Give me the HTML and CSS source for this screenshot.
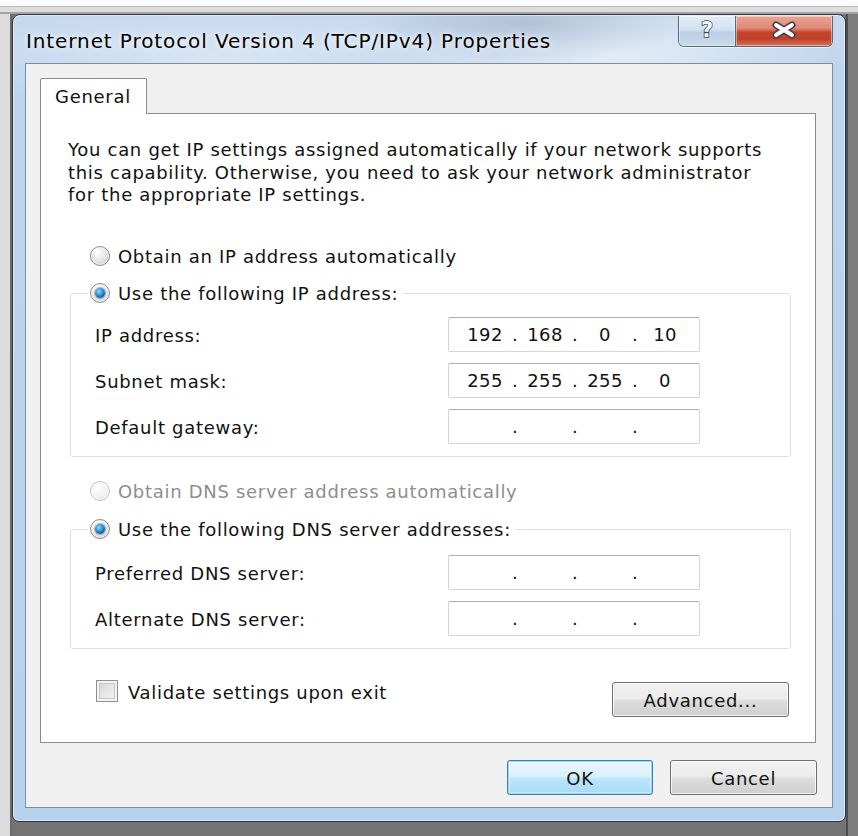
FILE: index.html
```html
<!DOCTYPE html>
<html lang="en">
<head>
<meta charset="utf-8">
<title>Internet Protocol Version 4 (TCP/IPv4) Properties</title>
<link rel="stylesheet" href="styles.css">
</head>
<body>
<div class="desktop">
  <div class="window">
    <div class="titlebar">
      <div class="title">Internet Protocol Version 4 (TCP/IPv4) Properties</div>
      <div class="caption-buttons">
        <div class="cap-btn help"><span class="help-glyph">?</span></div>
        <div class="cap-btn close">
          <svg width="30" height="18" viewBox="0 0 30 18">
            <path d="M7 4 L23 14 M23 4 L7 14" stroke="#3a3f45" stroke-width="7" stroke-linecap="round" fill="none"/>
            <path d="M7 4 L23 14 M23 4 L7 14" stroke="#ffffff" stroke-width="4" stroke-linecap="round" fill="none"/>
          </svg>
        </div>
      </div>
    </div>
    <div class="client">
      <div class="tabs"><div class="tab">General</div></div>
      <div class="panel">
        <p class="intro">You can get IP settings assigned automatically if your network supports<br>this capability. Otherwise, you need to ask your network administrator<br>for the appropriate IP settings.</p>

        <div class="option option-first"><span class="radio"></span><span class="opt-text">Obtain an IP address automatically</span></div>

        <div class="group group-ip">
          <div class="legend"><span class="radio checked"></span><span class="opt-text">Use the following IP address:</span></div>
          <div class="rows rows-ip">
            <div class="row"><span class="label">IP address:</span>
              <div class="ipfield"><span class="oct">192</span><span class="dot">.</span><span class="oct">168</span><span class="dot">.</span><span class="oct">0</span><span class="dot">.</span><span class="oct">10</span></div>
            </div>
            <div class="row"><span class="label">Subnet mask:</span>
              <div class="ipfield"><span class="oct">255</span><span class="dot">.</span><span class="oct">255</span><span class="dot">.</span><span class="oct">255</span><span class="dot">.</span><span class="oct">0</span></div>
            </div>
            <div class="row"><span class="label">Default gateway:</span>
              <div class="ipfield"><span class="oct"></span><span class="dot">.</span><span class="oct"></span><span class="dot">.</span><span class="oct"></span><span class="dot">.</span><span class="oct"></span></div>
            </div>
          </div>
        </div>

        <div class="option option-dns disabled"><span class="radio"></span><span class="opt-text">Obtain DNS server address automatically</span></div>

        <div class="group group-dns">
          <div class="legend"><span class="radio checked"></span><span class="opt-text">Use the following DNS server addresses:</span></div>
          <div class="rows rows-dns">
            <div class="row"><span class="label">Preferred DNS server:</span>
              <div class="ipfield"><span class="oct"></span><span class="dot">.</span><span class="oct"></span><span class="dot">.</span><span class="oct"></span><span class="dot">.</span><span class="oct"></span></div>
            </div>
            <div class="row"><span class="label">Alternate DNS server:</span>
              <div class="ipfield"><span class="oct"></span><span class="dot">.</span><span class="oct"></span><span class="dot">.</span><span class="oct"></span><span class="dot">.</span><span class="oct"></span></div>
            </div>
          </div>
        </div>

        <div class="bottom-row">
          <label class="check"><span class="checkbox"></span><span>Validate settings upon exit</span></label>
          <div class="btn btn-advanced">Advanced...</div>
        </div>
      </div>
      <div class="footer">
        <div class="btn btn-default">OK</div>
        <div class="btn">Cancel</div>
      </div>
    </div>
  </div>
</div>
</body>
</html>
```

FILE: styles.css
```css
* { box-sizing: border-box; }
html, body { margin: 0; padding: 0; }
body {
  width: 858px;
  height: 836px;
  overflow: hidden;
  font-family: "DejaVu Sans", "Open Sans", sans-serif;
  font-size: 18px;
  letter-spacing: 0.7px;
  color: #111;
}
.desktop {
  width: 858px;
  height: 836px;
  padding: 14px 12px 14px 12px;
  background:
    linear-gradient(to bottom, #fbfbfb 0 6px, #b9b9b9 6px 7px, #dedede 7px 12px, #a4a4a4 12px 14px, transparent 14px),
    linear-gradient(to right, #dcdcdc 0 10px, #6a6a6a 10px 12px, transparent 12px 846px, #4e4e4e 846px 848px, #7c7c7c 848px),
    #747474;
}
.window {
  width: 834px;
  height: 808px;
  border: 1px solid #2e3640;
  border-radius: 8px 8px 7px 7px;
  padding: 0 12px 13px 12px;
  display: flex;
  flex-direction: column;
  background:
    radial-gradient(ellipse 160px 40px at 62% 8px, rgba(120,140,165,0.35), transparent),
    radial-gradient(ellipse 220px 60px at 72% 40px, rgba(255,255,255,0.55), transparent),
    radial-gradient(ellipse 300px 50px at 25% 45px, rgba(255,255,255,0.35), transparent),
    linear-gradient(to bottom, #c6d9ef 0, #c2d7ee 48px, #bcd5ef 49px, #b6d2ef 100%);
  box-shadow: inset 0 0 0 1px rgba(255,255,255,0.5);
}
.titlebar {
  height: 49px;
  display: flex;
  justify-content: space-between;
  align-items: flex-start;
}
.title {
  margin-top: 13px;
  padding-left: 1px;
  font-size: 20px;
  letter-spacing: 0.9px;
  line-height: 26px;
  color: #000;
  white-space: nowrap;
  text-shadow: 0 0 10px rgba(255,255,255,0.9), 0 0 4px rgba(255,255,255,0.8);
}
.caption-buttons {
  display: flex;
  height: 31px;
  margin-top: 1px;
  border: 1px solid #56677a;
  border-top: none;
  border-radius: 0 0 6px 6px;
  overflow: hidden;
  box-shadow: 0 1px 0 rgba(255,255,255,0.6);
}
.cap-btn {
  display: flex;
  align-items: center;
  justify-content: center;
  height: 100%;
  box-shadow: inset 0 0 0 1px rgba(255,255,255,0.45);
}
.help {
  width: 57px;
  border-right: 1px solid #56677a;
  background: linear-gradient(to bottom, #e3ecf6 0%, #d3e1f0 45%, #bccfe4 55%, #c9daec 100%);
}
.help-glyph {
  font-family: "DejaVu Sans", sans-serif;
  font-weight: bold;
  font-size: 21px;
  letter-spacing: 0;
  line-height: 1;
  color: #f4f6f8;
  -webkit-text-stroke: 1.5px #3e4a57;
  paint-order: stroke fill;
  margin-top: -2px;
}
.close {
  width: 96px;
  background: linear-gradient(to bottom, #e8a493 0%, #de8a78 40%, #c6442e 55%, #c04028 75%, #d8705c 100%);
}
.close svg { margin-top: -2px; }
.client {
  flex: 1;
  border: 1px solid #7f8c9a;
  background: #f0f0f0;
  padding: 14px 16px 12px 14px;
  display: flex;
  flex-direction: column;
}
.tabs { display: flex; }
.tab {
  position: relative;
  z-index: 1;
  width: 107px;
  height: 36px;
  margin-bottom: -1px;
  border: 1px solid #898c95;
  border-bottom: none;
  border-radius: 2px 2px 0 0;
  background: #fff;
  padding-left: 14px;
  padding-top: 1px;
  line-height: 34px;
}
.panel {
  border: 1px solid #898c95;
  background: #fff;
  padding: 25px 24px 25px 27px;
}
.intro {
  margin: 0;
  line-height: 22.5px;
  white-space: nowrap;
}
.option {
  display: flex;
  align-items: center;
  height: 22px;
  margin-left: 22px;
}
.option-first { margin-top: 38.5px; }
.option-dns { margin-top: 23px; }
.opt-text { margin-left: 8px; line-height: 22px; padding-top: 2px; white-space: nowrap; }
.disabled { color: #8e8e8e; }
.radio {
  position: relative;
  width: 20px;
  height: 20px;
  flex: none;
  border-radius: 50%;
  border: 1px solid #8a8c8e;
  background: radial-gradient(circle at 35% 30%, #ffffff 0%, #e8e8e8 45%, #c9c9c9 100%);
  box-shadow: inset 0 0 0 1px rgba(255,255,255,0.7);
}
.disabled .radio {
  border-color: #c4c4c4;
  background: radial-gradient(circle at 35% 30%, #ffffff 0%, #f2f2f2 50%, #e2e2e2 100%);
}
.radio.checked::after {
  content: "";
  position: absolute;
  left: 4px;
  top: 4px;
  width: 10px;
  height: 10px;
  border-radius: 50%;
  background: radial-gradient(circle at 40% 35%, #9fdcff 0%, #3b9fe0 35%, #0d5a99 75%, #083a66 100%);
  box-shadow: 0 0 0 1px rgba(20,60,100,0.35);
}
.group {
  margin-left: 2px;
  border: 1px solid #d5dfe5;
  border-radius: 3px;
  padding-bottom: 12px;
}
.group-ip { margin-top: 26px; }
.group-dns { margin-top: 27px; }
.legend {
  display: flex;
  align-items: center;
  width: fit-content;
  height: 22px;
  margin: -12px 0 0 17px;
  padding: 0 5px 0 2px;
  background: #fff;
}
.rows { display: flex; flex-direction: column; gap: 11px; }
.rows-ip { margin-top: 13px; }
.rows-dns { margin-top: 15px; }
.row {
  display: flex;
  align-items: center;
  height: 35px;
  padding-left: 24px;
}
.label { width: 353px; flex: none; padding-top: 2px; }
.ipfield {
  width: 252px;
  height: 35px;
  border: 1px solid #d3d5da;
  border-top-color: #a9acb3;
  border-radius: 2px;
  background: #fff;
  padding-left: 12px;
  padding-top: 1px;
  display: grid;
  grid-template-columns: 48px 12px 48px 12px 48px 12px 48px;
  align-items: center;
  line-height: 32px;
  letter-spacing: 0.4px;
}
.oct { text-align: center; }
.dot { text-align: center; }
.bottom-row {
  margin-top: 33px;
  display: flex;
  justify-content: space-between;
  align-items: flex-start;
}
.check {
  display: flex;
  align-items: center;
  margin-left: 28px;
  margin-top: -2px;
  height: 22px;
}
.check span:last-child { padding-top: 2px; }
.checkbox {
  width: 22px;
  height: 22px;
  margin-right: 10px;
  border: 1px solid #8e8f8f;
  background: linear-gradient(135deg, #d0d0d0 0%, #e6e6e6 50%, #f8f8f8 100%);
  box-shadow: inset 0 0 0 2px #f4f4f4, inset 0 0 0 3px #c6c6c6;
}
.btn {
  display: flex;
  align-items: center;
  justify-content: center;
  height: 35px;
  padding-top: 2px;
  border: 1px solid #707070;
  border-radius: 3px;
  background: linear-gradient(to bottom, #f2f2f2 0%, #ebebeb 48%, #dddddd 52%, #cfcfcf 100%);
  box-shadow: inset 0 0 0 1px rgba(255,255,255,0.75);
  width: 147px;
}
.btn-advanced { width: 177px; margin-right: 2px; }
.footer {
  margin-top: 17px;
  margin-right: -1px;
  display: flex;
  justify-content: flex-end;
  gap: 17px;
}
.btn-default {
  width: 146px;
  border-color: #3c7fb1;
  background: linear-gradient(to bottom, #eaf6fd 0%, #d9f0fc 48%, #bee6fd 52%, #a7d9f5 100%);
  box-shadow: inset 0 0 0 1px #98d6f4, inset 0 0 0 2px rgba(255,255,255,0.4);
}
```
